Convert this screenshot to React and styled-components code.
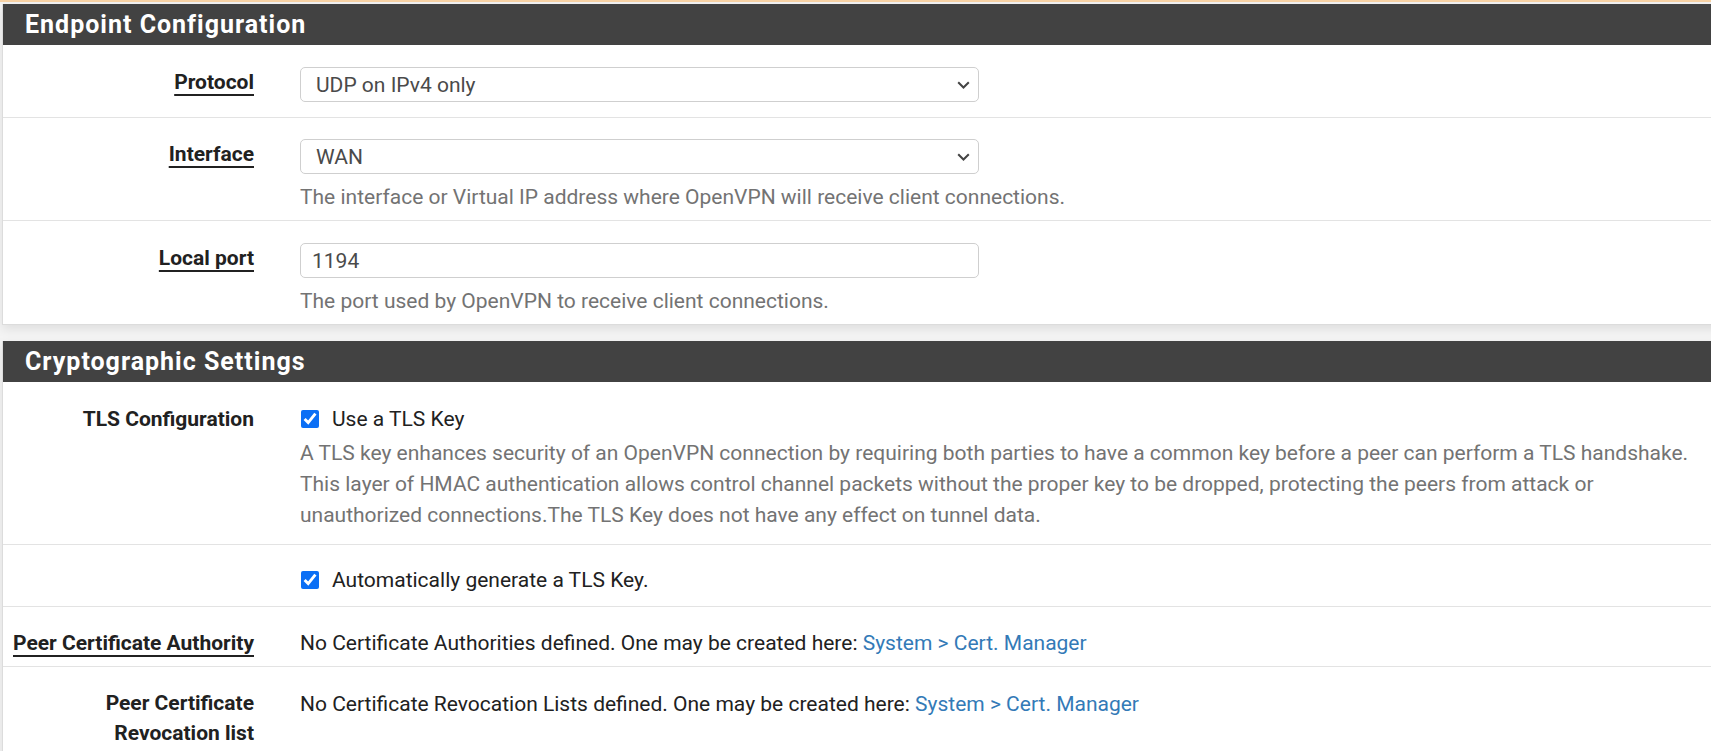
import React from "react";
import styled, { createGlobalStyle } from "styled-components";

const GlobalStyle = createGlobalStyle`
  html, body {
    margin: 0;
    padding: 0;
    background: #f4f4f4;
    overflow-x: hidden;
  }
  body {
    font-family: Roboto, "Liberation Sans", sans-serif;
    font-size: 21px;
    color: #212121;
  }
`;

// chevron for the select boxes
const Chevron = () => (
  <svg width="13" height="8" viewBox="0 0 13 8">
    <path d="M1.2 1.2 L6.5 6.5 L11.8 1.2" fill="none" stroke="#444" strokeWidth="2" />
  </svg>
);

function App() {
  return (
    <Page>
      <GlobalStyle />
      <TopEdge />

      <Panel>
        <PanelHeading>Endpoint Configuration</PanelHeading>

        <Row $pt={22} $pb={15}>
          <Label $underline>Protocol</Label>
          <Value>
            <SelectWrap>
              <Select defaultValue="udp4">
                <option value="udp4">UDP on IPv4 only</option>
              </Select>
              <Arrow>
                <Chevron />
              </Arrow>
            </SelectWrap>
          </Value>
        </Row>

        <Row $pt={21} $pb={7}>
          <Label $underline>Interface</Label>
          <Value>
            <SelectWrap>
              <Select defaultValue="wan">
                <option value="wan">WAN</option>
              </Select>
              <Arrow>
                <Chevron />
              </Arrow>
            </SelectWrap>
            <Help>The interface or Virtual IP address where OpenVPN will receive client connections.</Help>
          </Value>
        </Row>

        <Row $pt={22} $pb={7} $last>
          <Label $underline>Local port</Label>
          <Value>
            <TextInput type="text" defaultValue="1194" />
            <Help>The port used by OpenVPN to receive client connections.</Help>
          </Value>
        </Row>
      </Panel>

      <Panel>
        <PanelHeading>Cryptographic Settings</PanelHeading>

        <Row $pt={22} $pb={13}>
          <Label>TLS Configuration</Label>
          <Value>
            <CheckLine>
              <Check type="checkbox" defaultChecked />
              Use a TLS Key
            </CheckLine>
            <Help $gap={4}>
              A TLS key enhances security of an OpenVPN connection by requiring both parties to have a common key before a peer can perform a TLS handshake. This layer of HMAC authentication allows control channel packets without the proper key to be dropped, protecting the peers from attack or unauthorized connections.The TLS Key does not have any effect on tunnel data.
            </Help>
          </Value>
        </Row>

        <Row $pt={20} $pb={11}>
          <Label />
          <Value>
            <CheckLine>
              <Check type="checkbox" defaultChecked />
              Automatically generate a TLS Key.
            </CheckLine>
          </Value>
        </Row>

        <Row $pt={21} $pb={8}>
          <Label $underline>Peer Certificate Authority</Label>
          <Value>
            <Text>
              No Certificate Authorities defined. One may be created here: <Link href="#">System &gt; Cert. Manager</Link>
            </Text>
          </Value>
        </Row>

        <Row $pt={22} $pb={12} $last>
          <Label $lh={29.5}>
            Peer Certificate
            <br />
            Revocation list
          </Label>
          <Value>
            <Text>
              No Certificate Revocation Lists defined. One may be created here: <Link href="#">System &gt; Cert. Manager</Link>
            </Text>
          </Value>
        </Row>
      </Panel>
    </Page>
  );
}

export default App;

const Page = styled.div`
  display: flex;
  flex-direction: column;
  gap: 16px;
  padding-left: 2px;
`;

const TopEdge = styled.div`
  height: 2px;
  margin-bottom: -15px;
  margin-left: -2px;
  background: #f8d3a6;
  border-bottom: 1px solid #f2f2f2;
`;

const Panel = styled.section`
  width: 1740px;
  background: #fff;
  border: 1px solid #dcdcdc;
  border-top: none;
  box-shadow: 0 4px 10px rgba(0, 0, 0, 0.09);
`;

const PanelHeading = styled.h2`
  margin: 0;
  height: 41px;
  display: flex;
  align-items: center;
  padding-left: 22px;
  background: #424242;
  color: #fff;
  font-size: 25px;
  font-weight: 700;
  letter-spacing: 1px;
`;

const Row = styled.div`
  display: grid;
  grid-template-columns: 251px 1fr;
  column-gap: 46px;
  padding: ${(p) => p.$pt}px 0 ${(p) => p.$pb}px;
  border-bottom: ${(p) => (p.$last ? "none" : "1px solid #e3e3e3")};
`;

const Label = styled.div`
  text-align: right;
  font-weight: 700;
  line-height: ${(p) => p.$lh || 30}px;
  color: #212121;

  ${(p) =>
    p.$underline &&
    `
    justify-self: end;
    align-self: start;
    text-decoration: underline;
    text-decoration-thickness: 2px;
    text-underline-offset: 5px;
  `}
`;

const Value = styled.div`
  display: flex;
  flex-direction: column;
  align-items: flex-start;
`;

const SelectWrap = styled.div`
  position: relative;
  width: 679px;
`;

const Select = styled.select`
  appearance: none;
  width: 100%;
  height: 35px;
  padding: 0 40px 0 15px;
  border: 1px solid #cfcfcf;
  border-radius: 5px;
  background: #fff;
  color: #4a4a4a;
  font-family: inherit;
  font-size: 21px;
`;

const Arrow = styled.span`
  position: absolute;
  right: 9px;
  top: 14px;
  display: flex;
  pointer-events: none;
`;

const TextInput = styled.input`
  box-sizing: border-box;
  width: 679px;
  height: 35px;
  padding: 0 11px;
  border: 1px solid #cfcfcf;
  border-radius: 5px;
  color: #4a4a4a;
  font-family: inherit;
  font-size: 21px;
`;

const Help = styled.p`
  margin: ${(p) => (p.$gap !== undefined ? p.$gap : 8)}px 0 0;
  color: #737373;
  line-height: 31px;
  max-width: 1400px;
`;

const CheckLine = styled.label`
  display: flex;
  align-items: center;
  gap: 13px;
  line-height: 30px;
  color: #212121;
`;

const Check = styled.input`
  width: 18px;
  height: 18px;
  margin: 0 0 0 1px;
  accent-color: #0b6ff5;
`;

const Text = styled.div`
  line-height: 30px;
  color: #212121;
`;

const Link = styled.a`
  color: #337ab7;
  text-decoration: none;
`;
